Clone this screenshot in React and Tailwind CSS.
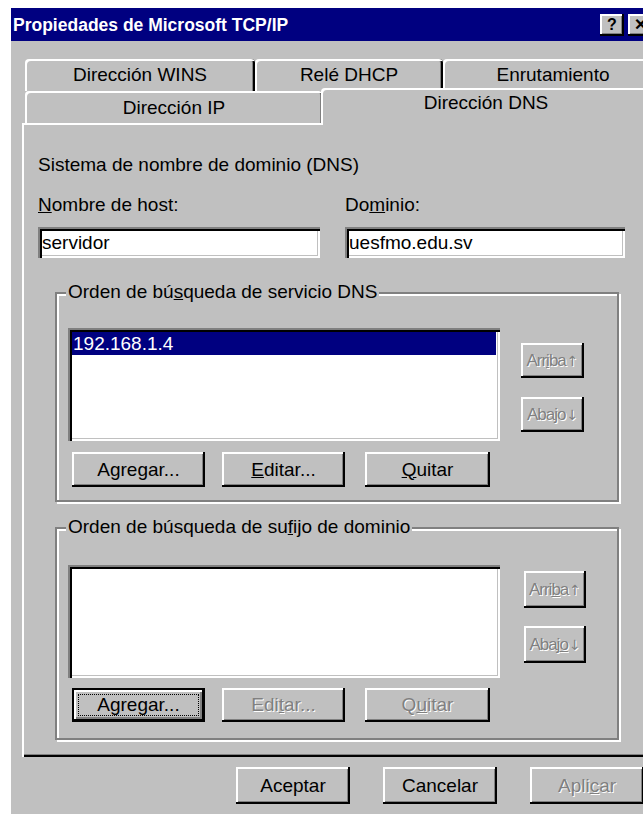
import React from "react";

// Win95-style 3D edges
const RAISED =
  "bg-[#c0c0c0] shadow-[inset_-2px_-2px_0_#000,inset_2px_2px_0_#fff,inset_-3px_-3px_0_#808080]";
const DEFAULT_BTN =
  "bg-[#c0c0c0] shadow-[inset_0_0_0_2px_#000,inset_-3px_-3px_0_#000,inset_4px_4px_0_#fff,inset_-5px_-5px_0_#808080]";
const SUNKEN =
  "bg-white shadow-[inset_2px_2px_0_#808080,inset_4px_4px_0_#000,inset_-2px_-2px_0_#fff,inset_-3px_-3px_0_#c0c0c0]";
const DISABLED = "text-[#808080] [text-shadow:1px_1px_0_#fff]";

function Button({ children, className = "", disabled = false, isDefault = false }) {
  return (
    <div
      className={`flex items-center justify-center leading-[22px] ${
        isDefault ? DEFAULT_BTN : RAISED
      } ${disabled ? DISABLED : "text-black"} ${className}`}
    >
      {isDefault ? (
        <span className="flex h-[calc(100%-12px)] w-[calc(100%-12px)] items-center justify-center border border-dotted border-black">
          {children}
        </span>
      ) : (
        children
      )}
    </div>
  );
}

function Arrow({ children }) {
  return (
    <span className="ml-[1px] font-['DejaVu_Sans',sans-serif] text-[14px] tracking-normal">
      {children}
    </span>
  );
}

function GroupBox({ title, className = "", children }) {
  return (
    <div
      className={`relative border-2 border-[#808080] shadow-[inset_2px_2px_0_#fff,2px_2px_0_#fff] ${className}`}
    >
      <span className="absolute -top-[13px] left-[9px] bg-[#c0c0c0] px-[2px] leading-[22px]">
        {title}
      </span>
      {children}
    </div>
  );
}

function Tab({ children, className = "" }) {
  return (
    <div
      className={`flex items-center justify-center rounded-t-[4px] leading-[22px] shadow-[inset_2px_2px_0_#fff,inset_-2px_0_0_#000,inset_-3px_0_0_#808080] ${className}`}
    >
      {children}
    </div>
  );
}

export default function App() {
  return (
    <div className="h-[814px] w-[643px] overflow-hidden bg-white font-['Liberation_Sans',Arial,sans-serif] text-[19px] text-black">
      <div className="ml-[11px] mt-[8px] flex h-[806px] w-[660px] flex-col bg-[#c0c0c0]">
        {/* caption bar */}
        <div className="flex h-[33px] items-center bg-[#000080] pl-[2px]">
          <span className="flex-1 text-[17.5px] font-bold leading-[22px] text-white">
            Propiedades de Microsoft TCP/IP
          </span>
          <div className="mr-[19px] flex gap-[4px]">
            <div className={`flex h-[22px] w-[24px] items-center justify-center text-[16px] font-bold leading-none ${RAISED}`}>
              ?
            </div>
            <div className={`flex h-[22px] w-[24px] items-center justify-center text-[16px] font-bold leading-none ${RAISED}`}>
              ✕
            </div>
          </div>
        </div>

        <div className="flex flex-col pl-[11px]">
          {/* tab strip */}
          <div className="ml-[3px] mt-[18px] flex flex-col">
            <div className="flex h-[32px]">
              <Tab className="w-[230px]">Dirección WINS</Tab>
              <Tab className="w-[188px]">Relé DHCP</Tab>
              <Tab className="w-[220px]">Enrutamiento</Tab>
            </div>
            <div className="flex h-[32px]">
              <Tab className="w-[298px] pt-[1px]">Dirección IP</Tab>
              <div className="relative z-10 -mb-[2px] -ml-[2px] -mt-[3px] flex h-[37px] w-[330px] items-start justify-center rounded-tl-[4px] bg-[#c0c0c0] pt-[4px] leading-[22px] shadow-[inset_2px_2px_0_#fff]">
                <span>Dirección DNS</span>
              </div>
            </div>
          </div>

          {/* property page */}
          <div className="flex h-[634px] w-[640px] flex-col pl-[16px] pt-[31px] shadow-[inset_2px_2px_0_#fff,inset_-2px_-2px_0_#000,inset_-3px_-3px_0_#808080]">
            <div className="leading-[22px]">Sistema de nombre de dominio (DNS)</div>

            <div className="mt-[18px] flex leading-[22px]">
              <span className="w-[307px]">
                <u>N</u>ombre de host:
              </span>
              <span>
                Do<u>m</u>inio:
              </span>
            </div>

            <div className="mt-[11px] flex gap-[25px]">
              <div className={`flex h-[31px] w-[282px] items-center pl-[4px] leading-[22px] ${SUNKEN}`}>
                servidor
              </div>
              <div className={`flex h-[31px] w-[280px] items-center pl-[4px] leading-[22px] ${SUNKEN}`}>
                uesfmo.edu.sv
              </div>
            </div>

            {/* DNS server search order */}
            <GroupBox
              className="ml-[17px] mt-[34px] h-[210px] w-[564px] pl-[11px] pt-[34px]"
              title={
                <>
                  Orden de bú<u>s</u>queda de servicio DNS
                </>
              }
            >
              <div className="flex">
                <div className={`h-[113px] w-[432px] p-[4px] ${SUNKEN}`}>
                  <div className="flex h-[23px] items-center bg-[#000080] pl-[1px] leading-[22px] text-white">
                    192.168.1.4
                  </div>
                </div>
                <div className="ml-[21px] flex flex-col gap-[19px] pt-[15px] text-[17px] tracking-[-1px]">
                  <Button disabled className="h-[35px] w-[63px]">
                    Arr<u>i</u>ba<Arrow>↑</Arrow>
                  </Button>
                  <Button disabled className="h-[35px] w-[63px]">
                    Abajo<Arrow>↓</Arrow>
                  </Button>
                </div>
              </div>
              <div className="ml-[4px] mt-[11px] flex">
                <Button className="h-[35px] w-[133px]">Agregar...</Button>
                <Button className="ml-[17px] h-[35px] w-[123px]">
                  <u>E</u>ditar...
                </Button>
                <Button className="ml-[20px] h-[35px] w-[125px]">
                  <u>Q</u>uitar
                </Button>
              </div>
            </GroupBox>

            {/* domain suffix search order */}
            <GroupBox
              className="ml-[17px] mt-[25px] h-[213px] w-[564px] pl-[11px] pt-[36px]"
              title={
                <>
                  Orden de búsqueda de su<u>f</u>ijo de dominio
                </>
              }
            >
              <div className="flex">
                <div className={`h-[113px] w-[432px] ${SUNKEN}`} />
                <div className="ml-[24px] flex flex-col gap-[18px] pt-[6px] text-[17px] tracking-[-1px]">
                  <Button disabled className="h-[37px] w-[62px]">
                    Arri<u>b</u>a<Arrow>↑</Arrow>
                  </Button>
                  <Button disabled className="h-[37px] w-[62px]">
                    Abaj<u>o</u><Arrow>↓</Arrow>
                  </Button>
                </div>
              </div>
              <div className="ml-[4px] mt-[10px] flex">
                <Button isDefault className="h-[34px] w-[133px]">
                  Agregar...
                </Button>
                <Button disabled className="ml-[17px] h-[34px] w-[123px]">
                  Edi<u>t</u>ar...
                </Button>
                <Button disabled className="ml-[20px] h-[34px] w-[125px]">
                  Q<u>u</u>itar
                </Button>
              </div>
            </GroupBox>
          </div>

          {/* dialog buttons */}
          <div className="ml-[214px] mt-[10px] flex gap-[33px]">
            <Button className="h-[37px] w-[114px]">Aceptar</Button>
            <Button className="h-[37px] w-[114px]">Cancelar</Button>
            <Button disabled className="h-[37px] w-[114px]">
              Apli<u>c</u>ar
            </Button>
          </div>
        </div>
      </div>
    </div>
  );
}
